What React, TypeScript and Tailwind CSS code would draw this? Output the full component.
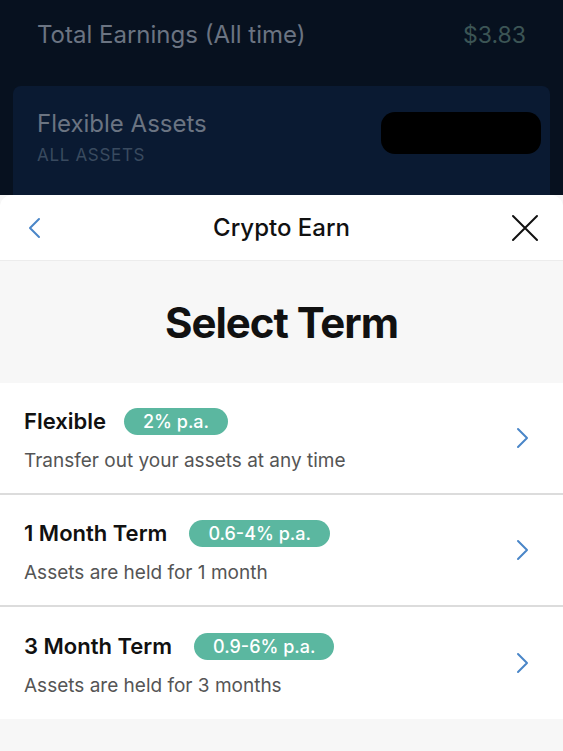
import React from "react";

const terms = [
  { title: "Flexible", rate: "2% p.a.", desc: "Transfer out your assets at any time", gap: "ml-[18px]" },
  { title: "1 Month Term", rate: "0.6-4% p.a.", desc: "Assets are held for 1 month", gap: "ml-[22px]" },
  { title: "3 Month Term", rate: "0.9-6% p.a.", desc: "Assets are held for 3 months", gap: "ml-[22px]" },
];

function Chevron({ className }: { className?: string }) {
  return (
    <svg width="14" height="22" viewBox="0 0 14 22" fill="none" className={className}>
      <path d="M3 2l9 9-9 9" stroke="#4a86c8" strokeWidth="2" strokeLinecap="round" strokeLinejoin="round" />
    </svg>
  );
}

export default function App() {
  return (
    <div className="w-[563px] h-[751px] overflow-hidden bg-[#f7f7f7] flex flex-col" style={{ fontFamily: "Inter, 'Noto Sans', sans-serif" }}>
      {/* dark page behind the sheet */}
      <div className="h-[195px] shrink-0 overflow-hidden bg-[#07111f]">
        <div className="flex items-center justify-between px-[37px] pt-[19px] h-[32px] box-content">
          <span className="text-[24px] text-[#6b7482]">Total Earnings (All time)</span>
          <span className="text-[23px] text-[#3c5555]">$3.83</span>
        </div>
        <div className="mx-[13px] mt-[35px] h-[160px] rounded-lg bg-[#0a1a32] relative pl-[24px] pt-[23px]">
          <div className="text-[24px] leading-[30px] text-[#6b7482]">Flexible Assets</div>
          <div className="mt-[4px] text-[17px] tracking-[0.04em] text-[#394a5f]">ALL ASSETS</div>
          <div className="absolute left-[368px] top-[26px] w-[160px] h-[42px] rounded-[14px] bg-black" />
        </div>
      </div>

      {/* sheet */}
      <div className="flex-1 bg-[#f7f7f7] rounded-t-[12px] overflow-hidden">
        <div className="h-[66px] bg-white border-b border-[#ececec] flex items-center px-[24px]">
          <div className="w-[40px] flex items-center pl-[3px]">
            <svg width="16" height="22" viewBox="0 0 16 22" fill="none">
              <path d="M12 2L3 11l9 9" stroke="#4a86c8" strokeWidth="2" strokeLinecap="round" strokeLinejoin="round" />
            </svg>
          </div>
          <span className="flex-1 text-center text-[24px] font-medium text-[#111]">Crypto Earn</span>
          <div className="w-[40px] flex items-center justify-end">
            <svg width="28" height="28" viewBox="0 0 28 28" fill="none">
              <path d="M2 2l24 24M26 2L2 26" stroke="#111" strokeWidth="2" strokeLinecap="round" />
            </svg>
          </div>
        </div>
        <div className="h-[122px] flex items-center justify-center">
          <h1 className="text-[42px] font-bold text-[#111] tracking-tight">Select Term</h1>
        </div>
        <div className="bg-white">
          {terms.map((t, i) => (
            <div
              key={t.title}
              className={`h-[112px] flex items-center justify-between pl-[24px] pr-[34px] ${i < terms.length - 1 ? "border-b-2 border-[#dcdcdc]" : ""}`}
            >
              <div className="flex flex-col pt-[4px]">
                <div className="flex items-center">
                  <span className="text-[22px] font-semibold text-[#111]">{t.title}</span>
                  <span className={`${t.gap} h-[27px] px-[19px] rounded-full bg-[#5bb7a0] text-white text-[18px] font-medium flex items-center`}>
                    {t.rate}
                  </span>
                </div>
                <span className="mt-[9px] text-[19px] text-[#555]">{t.desc}</span>
              </div>
              <Chevron />
            </div>
          ))}
        </div>
      </div>
    </div>
  );
}
